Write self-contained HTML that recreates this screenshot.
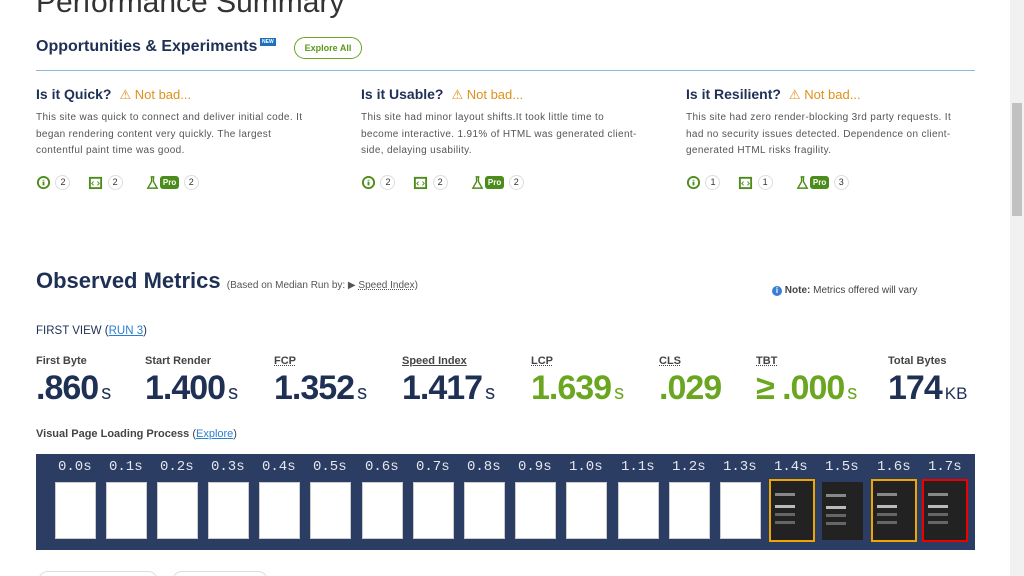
<!DOCTYPE html>
<html><head><meta charset="utf-8"><style>
*{margin:0;padding:0;box-sizing:border-box}
html,body{width:1024px;height:576px;overflow:hidden}
body{background:#fff;font-family:"Liberation Sans",sans-serif;position:relative;color:#1f3055}
.a{position:absolute;white-space:nowrap}
.h1{font-size:30px;color:#333;top:-14px;left:36px;font-weight:300}
.h2{font-size:16px;font-weight:bold;color:#1f3055}
.q{font-size:14px;font-weight:bold;color:#1f3055}
.nb{font-size:13px;color:#e0901a;font-weight:normal;margin-left:8px}
.p{font-size:10px;color:#555;line-height:16.5px;letter-spacing:0.35px}
.c{display:inline-block;width:15px;height:15px;border:1px solid #ddd;border-radius:50%;font-size:9px;text-align:center;line-height:13px;color:#333;vertical-align:middle}
.ic{display:inline-block;width:15px;height:15px;vertical-align:middle}
.pro{display:inline-block;background:#4c8c1a;color:#fff;font-size:8px;font-weight:bold;padding:2px 3px;border-radius:3px;vertical-align:middle}
.lab{font-size:11px;color:#444;font-weight:bold;top:355px}
.lab u{text-decoration:underline dotted}
.val{font-size:34px;font-weight:bold;top:369px;letter-spacing:-1px}
.val small{font-size:20px;font-weight:normal;letter-spacing:0;margin-left:3px}
.g{color:#6aa620}
.fs{background:#2b3d63;left:36px;top:454px;width:939px;height:96px}
.t{font-family:"Liberation Mono",monospace;font-size:14px;color:#e6e6ee;top:459px}
.fr{top:482px;width:41px;height:57px;background:#fff;border:1px solid #ccc}
.dk{background:#222;border:2px solid #f0a500}
.dk::before{content:"";position:absolute;left:4px;top:12px;width:20px;height:3px;background:#888;box-shadow:0 12px 0 #bbb,0 20px 0 #666,0 28px 0 #666}
</style></head><body>
<div class="a h1">Performance Summary</div>
<div class="a h2" style="left:36px;top:38px">Opportunities &amp; Experiments</div>
<div class="a" style="left:260px;top:38px;background:#1f6fbf;color:#fff;font-size:5px;font-weight:bold;padding:1px 2px">NEW</div>
<div class="a" style="left:294px;top:37px;width:68px;height:22px;border:1px solid #6aa620;border-radius:11px;color:#5a9a1a;font-size:9px;font-weight:bold;text-align:center;line-height:20px">Explore All</div>
<div class="a" style="left:36px;top:70px;width:939px;border-top:1px solid #8ab8e0"></div>

<div class="a q" style="left:36px;top:86px">Is it Quick?<span class="nb">⚠ Not bad...</span></div>
<div class="a p" style="left:36px;top:110px">This site was quick to connect and deliver initial code. It<br>began rendering content very quickly. The largest<br>contentful paint time was good.</div>
<div class="a q" style="left:361px;top:86px">Is it Usable?<span class="nb">⚠ Not bad...</span></div>
<div class="a p" style="left:361px;top:110px">This site had minor layout shifts.It took little time to<br>become interactive. 1.91% of HTML was generated client-<br>side, delaying usability.</div>
<div class="a q" style="left:686px;top:86px">Is it Resilient?<span class="nb">⚠ Not bad...</span></div>
<div class="a p" style="left:686px;top:110px">This site had zero render-blocking 3rd party requests. It<br>had no security issues detected. Dependence on client-<br>generated HTML risks fragility.</div>

<div class="a" style="left:36px;top:174px"><svg class="ic" viewBox="0 0 16 16"><circle cx="8" cy="8" r="6" fill="none" stroke="#4c8c1a" stroke-width="2"/><path d="M8 5v1M8 7v4" stroke="#4c8c1a" stroke-width="2"/></svg> <span class="c">2</span>&nbsp;&nbsp;&nbsp;&nbsp;<svg class="ic" viewBox="0 0 16 16"><rect x="2" y="3" width="12" height="11" fill="none" stroke="#4c8c1a" stroke-width="2"/><path d="M6 7l-2 2 2 2M10 7l2 2-2 2" stroke="#4c8c1a" fill="none"/></svg> <span class="c">2</span>&nbsp;&nbsp;&nbsp;&nbsp;&nbsp;<svg class="ic" viewBox="0 0 16 16"><path d="M6 2h4M7 2v5l-4 7h10l-4-7V2" fill="none" stroke="#4c8c1a" stroke-width="1.5"/></svg><span class="pro">Pro</span> <span class="c">2</span></div>
<div class="a" style="left:361px;top:174px"><svg class="ic" viewBox="0 0 16 16"><circle cx="8" cy="8" r="6" fill="none" stroke="#4c8c1a" stroke-width="2"/><path d="M8 5v1M8 7v4" stroke="#4c8c1a" stroke-width="2"/></svg> <span class="c">2</span>&nbsp;&nbsp;&nbsp;&nbsp;<svg class="ic" viewBox="0 0 16 16"><rect x="2" y="3" width="12" height="11" fill="none" stroke="#4c8c1a" stroke-width="2"/><path d="M6 7l-2 2 2 2M10 7l2 2-2 2" stroke="#4c8c1a" fill="none"/></svg> <span class="c">2</span>&nbsp;&nbsp;&nbsp;&nbsp;&nbsp;<svg class="ic" viewBox="0 0 16 16"><path d="M6 2h4M7 2v5l-4 7h10l-4-7V2" fill="none" stroke="#4c8c1a" stroke-width="1.5"/></svg><span class="pro">Pro</span> <span class="c">2</span></div>
<div class="a" style="left:686px;top:174px"><svg class="ic" viewBox="0 0 16 16"><circle cx="8" cy="8" r="6" fill="none" stroke="#4c8c1a" stroke-width="2"/><path d="M8 5v1M8 7v4" stroke="#4c8c1a" stroke-width="2"/></svg> <span class="c">1</span>&nbsp;&nbsp;&nbsp;&nbsp;<svg class="ic" viewBox="0 0 16 16"><rect x="2" y="3" width="12" height="11" fill="none" stroke="#4c8c1a" stroke-width="2"/><path d="M6 7l-2 2 2 2M10 7l2 2-2 2" stroke="#4c8c1a" fill="none"/></svg> <span class="c">1</span>&nbsp;&nbsp;&nbsp;&nbsp;&nbsp;<svg class="ic" viewBox="0 0 16 16"><path d="M6 2h4M7 2v5l-4 7h10l-4-7V2" fill="none" stroke="#4c8c1a" stroke-width="1.5"/></svg><span class="pro">Pro</span> <span class="c">3</span></div>

<div class="a" style="left:36px;top:268px;font-size:22px;font-weight:bold">Observed Metrics <span style="font-size:10px;font-weight:normal;color:#555">(Based on Median Run by: ▶ <u style="text-decoration:underline dotted">Speed Index</u>)</span></div>
<div class="a" style="left:772px;top:285px;font-size:10px;color:#444"><span style="display:inline-block;width:10px;height:10px;border-radius:50%;background:#3a7fd5;color:#fff;font-size:8px;text-align:center;line-height:10px;font-weight:bold">i</span> <b>Note:</b> Metrics offered will vary</div>
<div class="a" style="left:36px;top:325px;font-size:11.5px;color:#1f3055">FIRST VIEW (<u style="color:#2a7fd0">RUN 3</u>)</div>

<div class="a lab" style="left:36px">First Byte</div><div class="a val" style="left:36px">.860<small>s</small></div>
<div class="a lab" style="left:145px">Start Render</div><div class="a val" style="left:145px">1.400<small>s</small></div>
<div class="a lab" style="left:274px"><u>FCP</u></div><div class="a val" style="left:274px">1.352<small>s</small></div>
<div class="a lab" style="left:402px"><u style="text-decoration:underline">Speed Index</u></div><div class="a val" style="left:402px">1.417<small>s</small></div>
<div class="a lab" style="left:531px"><u>LCP</u></div><div class="a val g" style="left:531px">1.639<small>s</small></div>
<div class="a lab" style="left:659px"><u>CLS</u></div><div class="a val g" style="left:659px">.029</div>
<div class="a lab" style="left:756px"><u>TBT</u></div><div class="a val g" style="left:756px">≥ .000<small>s</small></div>
<div class="a lab" style="left:888px">Total Bytes</div><div class="a val" style="left:888px">174<small style="font-size:17px">KB</small></div>

<div class="a" style="left:36px;top:428px;font-size:11px;font-weight:bold;color:#444">Visual Page Loading Process <span style="font-weight:normal">(<u style="color:#2a7fd0">Explore</u>)</span></div>
<div class="a fs"></div>
<div class="a t" style="left:58px">0.0s</div><div class="a t" style="left:109px">0.1s</div><div class="a t" style="left:160px">0.2s</div><div class="a t" style="left:211px">0.3s</div><div class="a t" style="left:262px">0.4s</div><div class="a t" style="left:313px">0.5s</div><div class="a t" style="left:365px">0.6s</div><div class="a t" style="left:416px">0.7s</div><div class="a t" style="left:467px">0.8s</div><div class="a t" style="left:518px">0.9s</div><div class="a t" style="left:569px">1.0s</div><div class="a t" style="left:621px">1.1s</div><div class="a t" style="left:672px">1.2s</div><div class="a t" style="left:723px">1.3s</div><div class="a t" style="left:774px">1.4s</div><div class="a t" style="left:825px">1.5s</div><div class="a t" style="left:877px">1.6s</div><div class="a t" style="left:928px">1.7s</div>
<div class="a fr" style="left:55px"></div><div class="a fr" style="left:106px"></div><div class="a fr" style="left:157px"></div><div class="a fr" style="left:208px"></div><div class="a fr" style="left:259px"></div><div class="a fr" style="left:310px"></div><div class="a fr" style="left:362px"></div><div class="a fr" style="left:413px"></div><div class="a fr" style="left:464px"></div><div class="a fr" style="left:515px"></div><div class="a fr" style="left:566px"></div><div class="a fr" style="left:618px"></div><div class="a fr" style="left:669px"></div><div class="a fr" style="left:720px"></div>
<div class="a fr dk" style="left:769px;width:46px;height:63px;top:479px"></div>
<div class="a fr dk" style="left:822px;border:none;height:58px"></div>
<div class="a fr dk" style="left:871px;width:46px;height:63px;top:479px"></div>
<div class="a fr dk" style="left:922px;width:46px;height:63px;top:479px;border-color:#e00"></div>
<div class="a" style="left:38px;top:571px;width:120px;height:20px;border:1px solid #ddd;border-radius:10px"></div>
<div class="a" style="left:172px;top:571px;width:96px;height:20px;border:1px solid #ddd;border-radius:10px"></div>
<div class="a" style="left:1010px;top:0;width:14px;height:576px;background:#f1f1f1"></div>
<div class="a" style="left:1012px;top:103px;width:10px;height:113px;background:#c1c1c1"></div>
</body></html>
